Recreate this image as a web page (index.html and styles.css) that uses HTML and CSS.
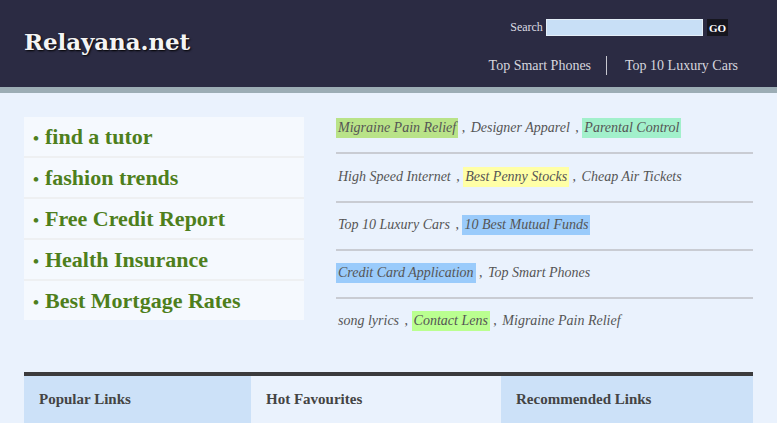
FILE: index.html
```html
<!DOCTYPE html>
<html lang="en">

<head>
    <meta charset="UTF-8">
    <meta name="viewport" content="width=device-width, initial-scale=1.0">
    <title>Relayana.net</title>
    <link rel="stylesheet" href="styles.css">
</head>

<body>

    <div class="header">
        <h1 class="logo">Relayana.net</h1>
        <div class="header-right">
            <form class="search">
                <label for="q">Search</label>
                <input type="text" id="q">
                <button type="button">GO</button>
            </form>
            <div class="nav">
                <a href="#">Top Smart Phones</a>
                <span class="sep"></span>
                <a href="#">Top 10 Luxury Cars</a>
            </div>
        </div>
    </div>

    <div class="main">
        <ul class="topics">
            <li><a href="#">find a tutor</a></li>
            <li><a href="#">fashion trends</a></li>
            <li><a href="#">Free Credit Report</a></li>
            <li><a href="#">Health Insurance</a></li>
            <li><a href="#">Best Mortgage Rates</a></li>
        </ul>

        <div class="related">
            <div class="row">
                <a href="#" class="hl green">Migraine Pain Relief</a> , <a href="#">Designer Apparel</a> , <a href="#" class="hl teal">Parental Control</a>
            </div>
            <div class="row">
                <a href="#">High Speed Internet</a> , <a href="#" class="hl yellow">Best Penny Stocks</a> , <a href="#">Cheap Air Tickets</a>
            </div>
            <div class="row">
                <a href="#">Top 10 Luxury Cars</a> , <a href="#" class="hl blue">10 Best Mutual Funds</a>
            </div>
            <div class="row">
                <a href="#" class="hl blue">Credit Card Application</a> , <a href="#">Top Smart Phones</a>
            </div>
            <div class="row">
                <a href="#">song lyrics</a> , <a href="#" class="hl lime">Contact Lens</a> , <a href="#">Migraine Pain Relief</a>
            </div>
        </div>
    </div>

    <div class="footer">
        <div class="col shaded">
            <h3>Popular Links</h3>
        </div>
        <div class="col">
            <h3>Hot Favourites</h3>
        </div>
        <div class="col shaded">
            <h3>Recommended Links</h3>
        </div>
    </div>

</body>

</html>
```

FILE: styles.css
```css
body {
    font-family: 'Liberation Serif', serif;
    background-color: #eaf2fd;
    margin: 0;
}

a {
    text-decoration: none;
}

.header {
    background-color: #2b2b43;
    height: 87px;
    border-bottom: 6px solid #9cadb5;
    display: flex;
    justify-content: space-between;
    padding: 0 39px 0 24px;
}

.logo {
    margin: 0;
    padding-top: 28px;
    font-family: 'DejaVu Serif', serif;
    font-size: 23px;
    letter-spacing: -0.1px;
    font-weight: bold;
    color: #f4f4f4;
    text-shadow: 1px 1px 2px #000;
}

.header-right {
    display: flex;
    flex-direction: column;
    align-items: flex-end;
    padding-top: 19px;
}

.search {
    display: flex;
    align-items: center;
    margin-right: 10px;
}

.search label {
    font-size: 12px;
    color: #dcdce4;
    margin-right: 3px;
}

.search input {
    width: 157px;
    height: 17px;
    box-sizing: border-box;
    border: 1px solid #e4eef8;
    background-color: #c8dff6;
    margin: 0;
}

.search button {
    height: 17px;
    margin-left: 4px;
    padding: 0 2px;
    border: none;
    background-color: #16161f;
    color: #fff;
    font-family: 'Liberation Serif', serif;
    font-weight: bold;
    font-size: 11px;
}

.nav {
    display: flex;
    align-items: center;
    margin-top: 20px;
}

.nav a {
    color: #d6d6de;
    font-size: 14px;
}

.sep {
    width: 1px;
    height: 19px;
    background-color: #c8c8d0;
    margin: 0 18px 0 15px;
}

.main {
    display: flex;
    gap: 32px;
    padding: 24px 24px 0;
}

.topics {
    list-style: none;
    margin: 0;
    padding: 0;
    width: 280px;
    background-color: #f5f9fe;
    align-self: flex-start;
}

.topics li {
    height: 39px;
    line-height: 40px;
    border-bottom: 2px solid #eef0f2;
    padding-left: 9px;
}

.topics li:last-child {
    border-bottom: none;
}

.topics a {
    color: #4e7f1c;
    font-weight: bold;
    font-size: 22px;
}

.topics a::before {
    content: "\2022";
    font-size: 17px;
    margin-right: 6px;
}

.related {
    width: 417px;
}

.row {
    padding: 12px 0 14px;
    border-bottom: 2px solid #c9ccd3;
    font-size: 14px;
    line-height: 20px;
    color: #555;
}

.row:first-child {
    padding-top: 1px;
}

.row:nth-child(2) {
    padding-top: 13px;
}

.row:last-child {
    border-bottom: none;
}

.row a {
    color: #555;
    font-style: italic;
    padding: 0 2px;
    display: inline-block;
}

.hl.green {
    background-color: #b9e388;
}

.hl.teal {
    background-color: #a2f0cb;
}

.hl.yellow {
    background-color: #ffffa6;
}

.hl.blue {
    background-color: #9acbfb;
}

.hl.lime {
    background-color: #baff90;
}

.footer {
    display: flex;
    margin: 27px 24px 0;
    border-top: 4px solid #3b3b3d;
}

.col {
    width: 250px;
}

.col:first-child {
    width: 227px;
}

.col:last-child {
    width: 252px;
}

.col.shaded {
    background-color: #cce1f8;
}

.col h3 {
    margin: 0;
    padding: 15px 15px 20px;
    font-size: 15px;
    color: #444;
}
```
